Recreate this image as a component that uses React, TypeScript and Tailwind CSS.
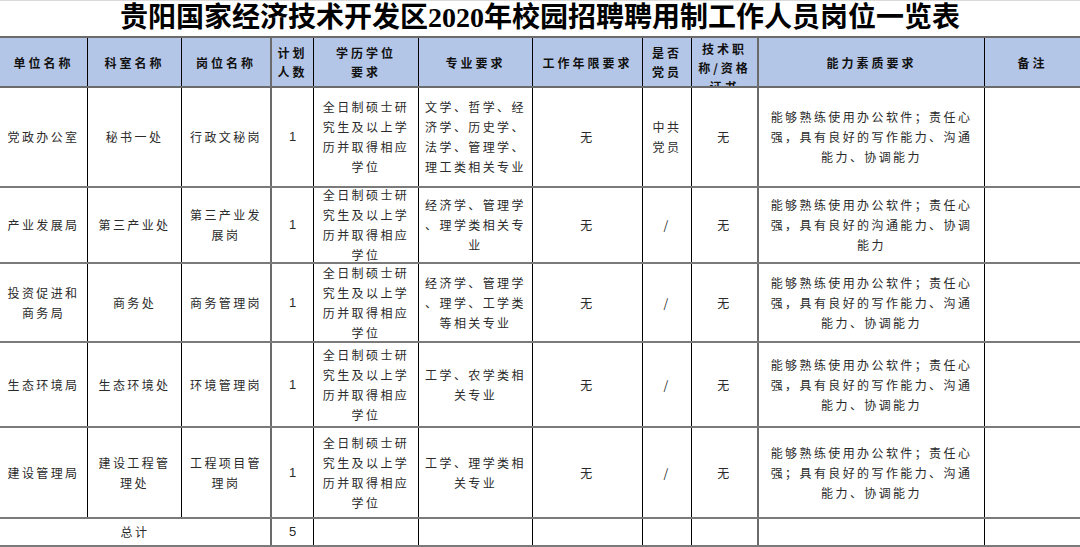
const cols = [87, 94, 89, 43, 105, 114, 110, 49, 66, 227, 96];

const thin = "border-l border-l-black";
const thick = "border-l-2 border-l-[#6b6b6b]";
const leftBorders = ["", thin, thin, thick, thin, thin, thin, thin, thin, thick, thin];

type Row = {
  h: number;
  cells: string[][];
};

const ability1 = ["能够熟练使用办公软件；责任心", "强，具有良好的写作能力、沟通", "能力、协调能力"];
const edu = ["全日制硕士研", "究生及以上学", "历并取得相应", "学位"];

const rows: Row[] = [
  {
    h: 100,
    cells: [
      ["党政办公室"],
      ["秘书一处"],
      ["行政文秘岗"],
      ["1"],
      edu,
      ["文学、哲学、经", "济学、历史学、", "法学、管理学、", "理工类相关专业"],
      ["无"],
      ["中共", "党员"],
      ["无"],
      ability1,
      [],
    ],
  },
  {
    h: 76,
    cells: [
      ["产业发展局"],
      ["第三产业处"],
      ["第三产业发", "展岗"],
      ["1"],
      edu,
      ["经济学、管理学", "、理学类相关专", "业"],
      ["无"],
      ["/"],
      ["无"],
      ["能够熟练使用办公软件；责任心", "强，具有良好的沟通能力、协调", "能力"],
      [],
    ],
  },
  {
    h: 79,
    cells: [
      ["投资促进和", "商务局"],
      ["商务处"],
      ["商务管理岗"],
      ["1"],
      edu,
      ["经济学、管理学", "、理学、工学类", "等相关专业"],
      ["无"],
      ["/"],
      ["无"],
      ability1,
      [],
    ],
  },
  {
    h: 85,
    cells: [
      ["生态环境局"],
      ["生态环境处"],
      ["环境管理岗"],
      ["1"],
      edu,
      ["工学、农学类相", "关专业"],
      ["无"],
      ["/"],
      ["无"],
      ability1,
      [],
    ],
  },
  {
    h: 91,
    cells: [
      ["建设管理局"],
      ["建设工程管", "理处"],
      ["工程项目管", "理岗"],
      ["1"],
      edu,
      ["工学、理学类相", "关专业"],
      ["无"],
      ["/"],
      ["无"],
      ["能够熟练使用办公软件；责任心", "强；具有良好的写作能力、沟通", "能力、协调能力"],
      [],
    ],
  },
];

const headers: string[][] = [
  ["单位名称"],
  ["科室名称"],
  ["岗位名称"],
  ["计划", "人数"],
  ["学历学位", "要求"],
  ["专业要求"],
  ["工作年限要求"],
  ["是否", "党员"],
  ["技术职", "称/资格", "证书"],
  ["能力素质要求"],
  ["备注"],
];

const Lines = ({ lines, num }: { lines: string[]; num?: boolean }) => (
  <div className={num ? "font-['Liberation_Sans'] text-[13px] tracking-normal" : ""}>
    {lines.map((l, i) => (
      <div key={i} className="whitespace-nowrap">
        {l}
      </div>
    ))}
  </div>
);

export default function App() {
  return (
    <div className="w-[1080px] h-[547px] overflow-hidden bg-white font-['Noto_Sans_CJK_SC',sans-serif]">
      <div className="h-[36px] border-t border-[#d9d9d9] flex items-center justify-center">
        <h1 className="text-[28px] leading-none font-bold text-black font-['Liberation_Serif','Noto_Sans_CJK_SC',serif] -mt-[2px]">
          贵阳国家经济技术开发区2020年校园招聘聘用制工作人员岗位一览表
        </h1>
      </div>

      <div className="flex bg-[#b4c6e7] border-y-2 border-y-[#6b6b6b] h-[52px]">
        {headers.map((h, i) => (
          <div
            key={i}
            style={{ width: cols[i] }}
            className={`${leftBorders[i]} shrink-0 overflow-hidden flex flex-col ${
              i === 8 ? "justify-start pt-[1px]" : "justify-center"
            } items-center text-center text-[12px] leading-[19px] font-bold text-[#111] tracking-[3px]`}
          >
            <Lines lines={h} />
          </div>
        ))}
      </div>

      {rows.map((r, ri) => (
        <div key={ri} className="flex border-b-2 border-b-[#7a7a7a]" style={{ height: r.h }}>
          {r.cells.map((c, i) => (
            <div
              key={i}
              style={{ width: cols[i] }}
              className={`${leftBorders[i]} shrink-0 flex items-center justify-center text-center text-[12px] leading-[20px] text-[#2a2a2a] tracking-[2.4px]`}
            >
              <Lines lines={c} num={i === 3} />
            </div>
          ))}
        </div>
      ))}

      <div className="flex h-[28px] border-b-2 border-b-[#7a7a7a]">
        <div
          style={{ width: cols[0] + cols[1] + cols[2] }}
          className="shrink-0 flex items-center justify-center text-[12px] tracking-[2.4px] text-[#2a2a2a]"
        >
          总计
        </div>
        {cols.slice(3).map((w, j) => (
          <div
            key={j}
            style={{ width: w }}
            className={`${leftBorders[j + 3]} shrink-0 flex items-center justify-center`}
          >
            {j === 0 && <span className="font-['Liberation_Sans'] text-[13px] text-[#2a2a2a]">5</span>}
          </div>
        ))}
      </div>
    </div>
  );
}
